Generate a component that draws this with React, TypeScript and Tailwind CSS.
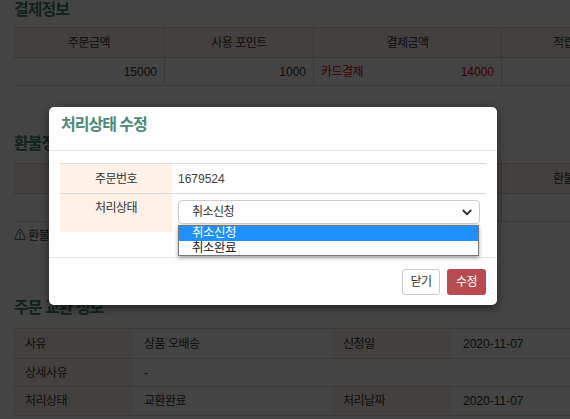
import React from "react";

const font = "font-['Liberation_Sans','Noto_Sans_CJK_KR',sans-serif]";

function PageTitle({ children, cls }: { children: React.ReactNode; cls: string }) {
  return (
    <div className={`${cls} text-[16px] leading-[20px] font-bold tracking-[-1px] text-[#3f8070]`}>
      {children}
    </div>
  );
}

export default function App() {
  return (
    <div className={`relative w-[570px] h-[419px] overflow-hidden bg-white ${font} text-[12px] text-[#333]`}>
      {/* page underneath */}
      <div className="pl-[14px] w-[646px]">
        <PageTitle cls="h-[27px]">결제정보</PageTitle>
        <div className="border-t border-[#d6d6d6]">
          <div className="grid grid-cols-[151px_149px_188px_144px] h-[30px] bg-[#fdf1e8] border-b border-[#d6d6d6]">
            <div className="flex items-center justify-center border-r border-[#d6d6d6] tracking-[-0.5px]">주문금액</div>
            <div className="flex items-center justify-center border-r border-[#d6d6d6] tracking-[-0.5px]">사용 포인트</div>
            <div className="flex items-center justify-center border-r border-[#d6d6d6] tracking-[-0.5px]">결제금액</div>
            <div className="flex items-center justify-center tracking-[-0.5px]">적립금액</div>
          </div>
          <div className="grid grid-cols-[151px_149px_188px_144px] h-[28px] border-b border-[#d6d6d6]">
            <div className="flex items-center justify-end pr-[7px] border-r border-[#d6d6d6]">15000</div>
            <div className="flex items-center justify-end pr-[7px] border-r border-[#d6d6d6]">1000</div>
            <div className="flex items-center justify-between px-[7px] border-r border-[#d6d6d6] text-[#d40000]">
              <span className="tracking-[-0.5px]">카드결제</span>
              <span>14000</span>
            </div>
            <div />
          </div>
        </div>

        <PageTitle cls="mt-[48px] h-[29px]">환불정보</PageTitle>
        <div className="border-t border-[#d6d6d6]">
          <div className="grid grid-cols-[151px_149px_188px_144px] h-[30px] bg-[#fdf1e8] border-b border-[#d6d6d6]">
            <div className="flex items-center justify-center border-r border-[#d6d6d6]">환불방법</div>
            <div className="flex items-center justify-center border-r border-[#d6d6d6]">환불계좌</div>
            <div className="flex items-center justify-center border-r border-[#d6d6d6]">예금주</div>
            <div className="flex items-center justify-center tracking-[-0.5px]">환불금액</div>
          </div>
          <div className="grid grid-cols-[151px_149px_188px_144px] h-[28px] border-b border-[#d6d6d6]">
            <div className="border-r border-[#d6d6d6]" />
            <div className="border-r border-[#d6d6d6]" />
            <div className="border-r border-[#d6d6d6]" />
            <div />
          </div>
        </div>
        <div className="mt-[5px] leading-[18px] tracking-[-0.5px]">⚠ 환불 정보는 결제 수단에 따라 다를 수 있습니다.</div>

        <PageTitle cls="mt-[53px] h-[30px]">주문 교환 정보</PageTitle>
        <div className="border-t border-[#d6d6d6]">
          <div className="grid grid-cols-[119px_199px_119px_195px] h-[30px] border-b border-[#d6d6d6]">
            <div className="flex items-center pl-[11px] bg-[#fdf1e8] tracking-[-0.5px]">사유</div>
            <div className="flex items-center pl-[11px] tracking-[-0.5px]">상품 오배송</div>
            <div className="flex items-center pl-[11px] bg-[#fdf1e8] tracking-[-0.5px]">신청일</div>
            <div className="flex items-center pl-[12px]">2020-11-07</div>
          </div>
          <div className="grid grid-cols-[119px_513px] h-[28px] border-b border-[#d6d6d6]">
            <div className="flex items-center pl-[11px] bg-[#fdf1e8] tracking-[-0.5px]">상세사유</div>
            <div className="flex items-center pl-[11px]">-</div>
          </div>
          <div className="grid grid-cols-[119px_199px_119px_195px] h-[29px] border-b border-[#d6d6d6]">
            <div className="flex items-center pl-[11px] bg-[#fdf1e8] tracking-[-0.5px]">처리상태</div>
            <div className="flex items-center pl-[11px] tracking-[-0.5px]">교환완료</div>
            <div className="flex items-center pl-[11px] bg-[#fdf1e8] tracking-[-0.5px]">처리날짜</div>
            <div className="flex items-center pl-[12px]">2020-11-07</div>
          </div>
        </div>
      </div>

      {/* overlay */}
      <div className="absolute inset-0 bg-[rgba(0,0,0,0.733)]" />

      {/* modal */}
      <div className="absolute left-[49px] top-[107px] w-[448px] h-[198px] bg-white rounded-[5px] shadow-[0_3px_9px_rgba(0,0,0,0.5)] flex flex-col">
        <div className="h-[44px] border-b border-[#e5e5e5] pl-[12px] pt-[8px]">
          <div className="text-[16px] leading-[20px] font-bold tracking-[-1px] text-[#4b8a79]">처리상태 수정</div>
        </div>
        <div className="relative px-[11px] pt-[12px] h-[106px]">
          <div className="border-t border-[#dcdcdc]">
            <div className="grid grid-cols-[112px_1fr] h-[30px] border-b border-[#dcdcdc]">
              <div className="flex items-center justify-center bg-[#fdf1e8] tracking-[-0.5px]">주문번호</div>
              <div className="flex items-center pl-[6px] text-[#444]">1679524</div>
            </div>
            <div className="grid grid-cols-[112px_1fr] h-[38px]">
              <div className="bg-[#fdf1e8] text-center pt-[5px] leading-[18px] tracking-[-0.5px]">처리상태</div>
              <div className="pl-[6px] pr-[6px] pt-[6px]">
                <div className="h-[24px] rounded-[4px] border border-[#cdcdcd] shadow-[0_1px_1px_rgba(0,0,0,0.08)] flex items-center justify-between pl-[13px] pr-[6px]">
                  <span className="tracking-[-0.5px]">취소신청</span>
                  <svg width="12" height="12" viewBox="0 0 16 16" fill="none">
                    <path d="M3 6l5 5 5-5" stroke="#333" strokeWidth="2.4" strokeLinecap="round" strokeLinejoin="round" />
                  </svg>
                </div>
              </div>
            </div>
          </div>
          {/* native dropdown popup */}
          <div className="absolute left-[129px] top-[74px] w-[301px] h-[31px] bg-white border border-[#767676] shadow-[0_2px_4px_rgba(0,0,0,0.35)] flex flex-col">
            <div className="h-[15px] leading-[15px] bg-[#1e90ff] text-white pl-[13px] tracking-[-0.5px] text-[12.5px]">취소신청</div>
            <div className="h-[14px] leading-[14px] pl-[13px] tracking-[-0.5px] text-[12.5px] text-[#222]">취소완료</div>
          </div>
        </div>
        <div className="flex-1 border-t border-[#e5e5e5] flex justify-end items-start gap-[7px] pt-[11px] pr-[11px]">
          <button className="h-[26px] w-[38px] rounded-[3px] border border-[#cccccc] bg-white text-[#333] text-[12px] tracking-[-0.5px]">닫기</button>
          <button className="h-[26px] w-[39px] rounded-[3px] bg-[#b84a50] text-white text-[12px] tracking-[-0.5px]">수정</button>
        </div>
      </div>
    </div>
  );
}
